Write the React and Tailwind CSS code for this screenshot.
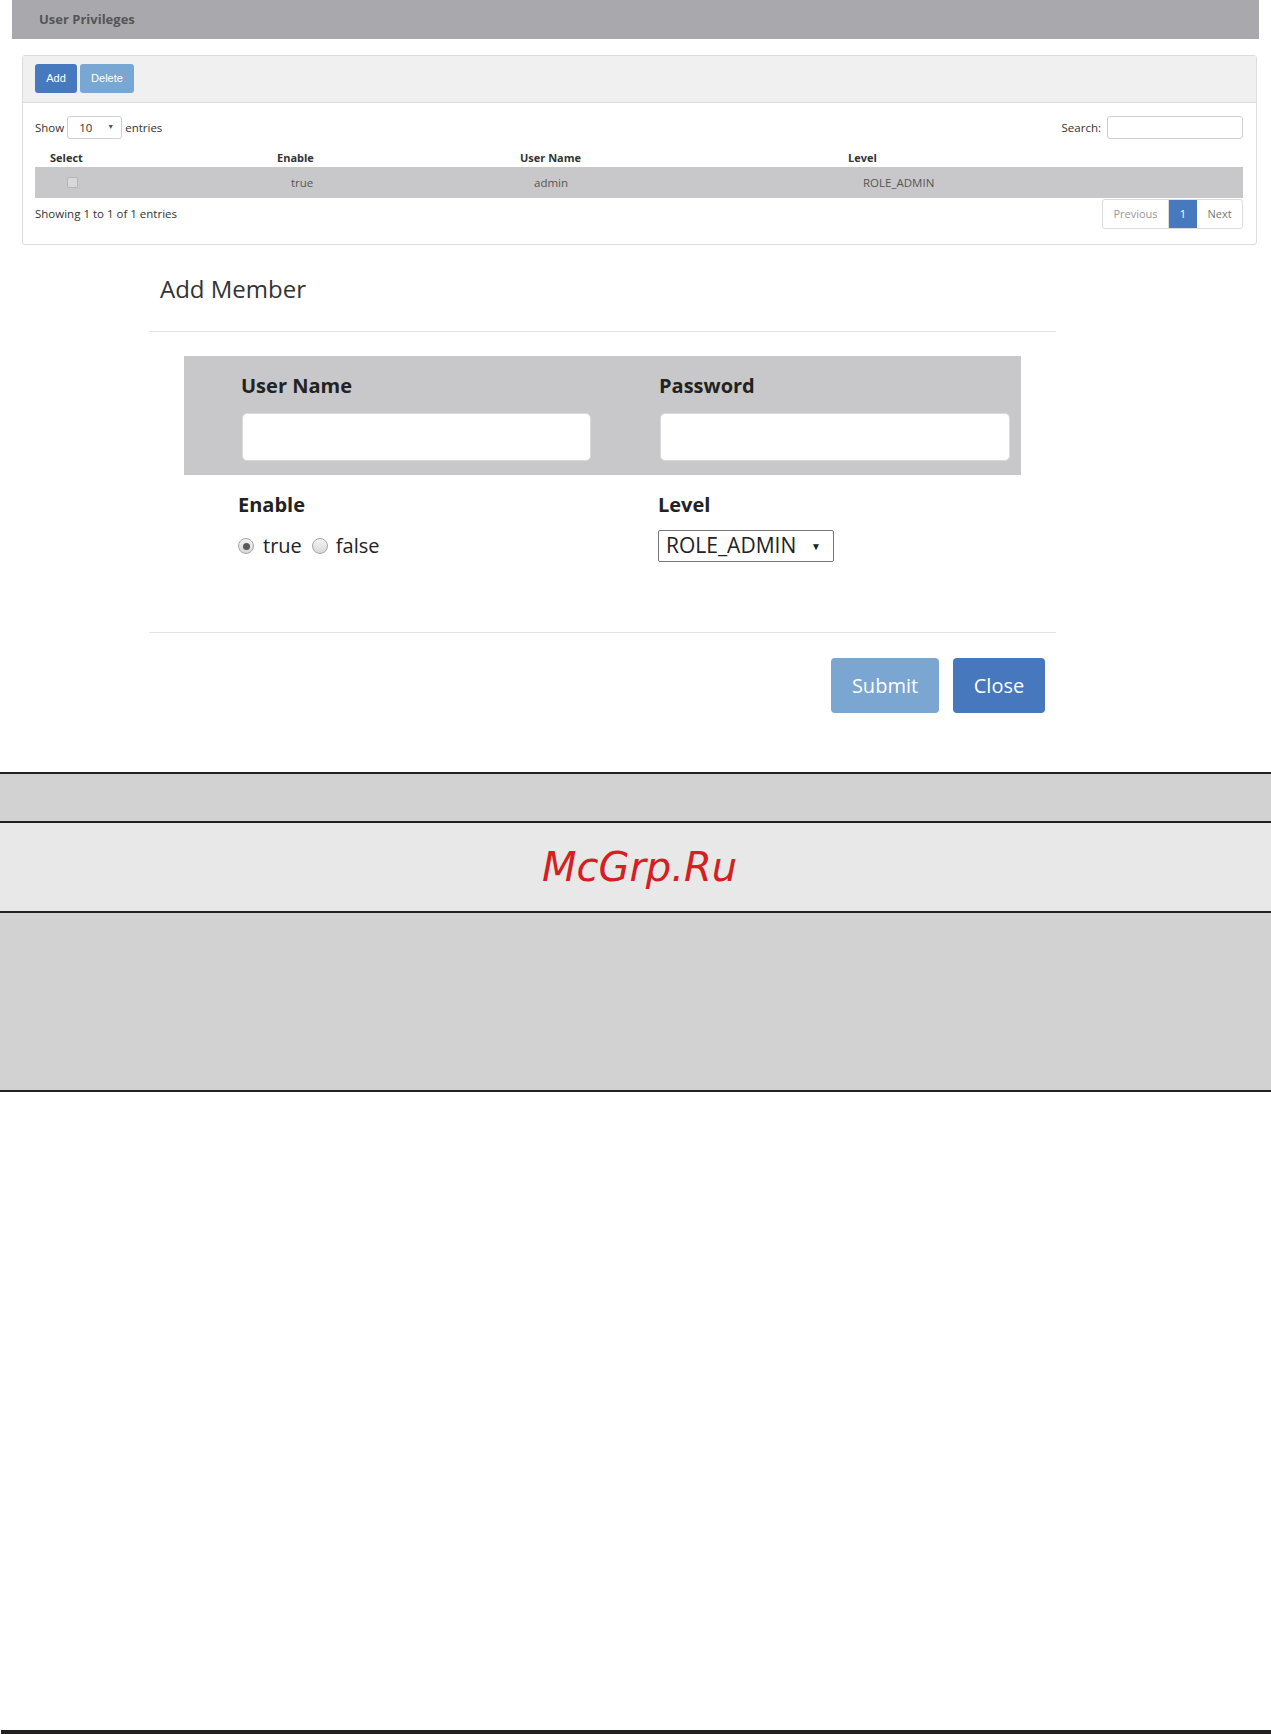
import React from "react";

const sans = { fontFamily: '"Open Sans", "Noto Sans", sans-serif' };

function Radio({ checked }) {
    return (
        <span className="w-[16px] h-[16px] rounded-full border border-[#a5a5a5] bg-gradient-to-b from-[#f4f4f4] to-[#d8d8d8] flex items-center justify-center">
            {checked && <span className="w-[7px] h-[7px] rounded-full bg-[#5a5a5a]" />}
        </span>
    );
}

function PrivilegesPanel() {
    return (
        <div className="ml-[22px] mt-[16px] w-[1235px] border border-[#dcdcdc] rounded-[3px] text-[11.5px] text-[#333]">
            {/* toolbar */}
            <div className="h-[47px] bg-[#f1f0f1] border-b border-[#dcdcdc] pl-[12px] pt-[8px] flex gap-[3px]">
                <button className="w-[42px] h-[29px] rounded-[3px] bg-[#4679bd] text-white text-[11px] font-['Liberation_Sans',sans-serif]">
                    Add
                </button>
                <button className="w-[54px] h-[29px] rounded-[3px] bg-[#79a7d3] text-white text-[11px] font-['Liberation_Sans',sans-serif]">
                    Delete
                </button>
            </div>

            <div className="pl-[12px] pr-[13px] pt-[13px] pb-[15px]">
                {/* length + search */}
                <div className="flex justify-between items-center h-[23px]">
                    <div className="flex items-center gap-[3px]">
                        <span>Show</span>
                        <div className="w-[55px] h-[23px] border border-[#cfcfcf] rounded-[3px] flex items-center justify-between pl-[11px] pr-[7px] bg-white">
                            <span>10</span>
                            <span className="text-[7px] text-[#555]">▼</span>
                        </div>
                        <span>entries</span>
                    </div>
                    <div className="flex items-center gap-[6px]">
                        <span>Search:</span>
                        <div className="w-[136px] h-[23px] border border-[#cfcfcf] rounded-[3px] bg-white" />
                    </div>
                </div>

                {/* table */}
                <div className="grid grid-cols-[200px_235px_285px_1fr] h-[28px] pt-[10px] items-center font-bold text-[11px]">
                    <span className="pl-[15px]">Select</span>
                    <span className="pl-[42px]">Enable</span>
                    <span className="pl-[50px]">User Name</span>
                    <span className="pl-[93px]">Level</span>
                </div>
                <div className="grid grid-cols-[200px_235px_285px_1fr] h-[31px] items-center bg-[#c8c8ca] text-[#555]">
                    <span className="pl-[32px]">
                        <span className="block w-[11px] h-[11px] rounded-[2px] border border-[#b5b5b5] bg-[#d8d8da]" />
                    </span>
                    <span className="pl-[56px]">true</span>
                    <span className="pl-[64px]">admin</span>
                    <span className="pl-[108px]">ROLE_ADMIN</span>
                </div>

                {/* info + pagination */}
                <div className="flex justify-between items-center mt-[1px]">
                    <span>Showing 1 to 1 of 1 entries</span>
                    <div className="flex h-[30px] border border-[#dcdcdc] rounded-[3px] overflow-hidden text-[11px]">
                        <span className="w-[66px] flex items-center justify-center text-[#999] border-r border-[#dcdcdc]">Previous</span>
                        <span className="w-[28px] flex items-center justify-center bg-[#4679bd] text-white">1</span>
                        <span className="w-[45px] flex items-center justify-center text-[#777]">Next</span>
                    </div>
                </div>
            </div>
        </div>
    );
}

function AddMember() {
    return (
        <div className="ml-[149px] w-[907px] mt-[27px] text-[#222]">
            <h2 className="pl-[11px] text-[24px] leading-[33px] text-[#333]">Add Member</h2>
            <div className="mt-[26px] h-px bg-[#e3e3e3]" />

            <div className="ml-[35px] mt-[24px] w-[837px] bg-[#c8c8ca] pl-[57px] pt-[16px] pb-[14px] grid grid-cols-[418px_350px]">
                <div>
                    <div className="text-[20px] font-bold leading-[28px]">User Name</div>
                    <div className="mt-[13px] ml-[1px] w-[349px] h-[48px] bg-white rounded-[5px] border border-[#dadada]" />
                </div>
                <div>
                    <div className="text-[20px] font-bold leading-[28px]">Password</div>
                    <div className="mt-[13px] ml-[1px] w-[350px] h-[48px] bg-white rounded-[5px] border border-[#dadada]" />
                </div>
            </div>

            <div className="ml-[89px] mt-[16px] grid grid-cols-[420px_1fr]">
                <div>
                    <div className="text-[20px] font-bold leading-[28px]">Enable</div>
                    <div className="mt-[11px] h-[32px] flex items-center text-[20px]">
                        <Radio checked />
                        <span className="ml-[9px]">true</span>
                        <span className="ml-[10px]"><Radio /></span>
                        <span className="ml-[8px]">false</span>
                    </div>
                </div>
                <div>
                    <div className="text-[20px] font-bold leading-[28px]">Level</div>
                    <div className="mt-[11px] w-[176px] h-[32px] border border-[#777] rounded-[2px] flex items-center justify-between pl-[7px] pr-[12px] bg-white">
                        <span className="text-[21px] text-[#222]">ROLE_ADMIN</span>
                        <span className="text-[10px] text-[#222]">▼</span>
                    </div>
                </div>
            </div>

            <div className="mt-[70px] h-px bg-[#e3e3e3]" />

            <div className="mt-[25px] pr-[11px] flex justify-end gap-[14px]">
                <button className="w-[108px] h-[55px] rounded-[4px] bg-[#7aa6d1] text-white text-[20px]">Submit</button>
                <button className="w-[92px] h-[55px] rounded-[4px] bg-[#4777bd] text-white text-[20px]">Close</button>
            </div>
        </div>
    );
}

export default function App() {
    return (
        <div className="min-h-[1734px] w-[1271px] bg-white flex flex-col" style={sans}>
            <div className="ml-[12px] w-[1247px] h-[39px] bg-[#a9a8ad] flex items-center pl-[27px]">
                <span className="text-[13px] font-bold text-[#555]">User Privileges</span>
            </div>

            <PrivilegesPanel />
            <AddMember />

            {/* footer bands */}
            <div className="mt-[59px] border-t-2 border-[#231f20]">
                <div className="h-[49px] bg-[#d2d2d2] border-b-2 border-[#231f20]" />
                <div className="h-[90px] bg-[#e8e8e8] border-b-2 border-[#231f20] flex items-center justify-center pl-[8px]">
                    <span className="text-[40px] italic text-[#d42020] font-['DejaVu_Sans',sans-serif]">McGrp.Ru</span>
                </div>
                <div className="h-[179px] bg-[#d2d2d2] border-b-2 border-[#231f20]" />
            </div>

            <div className="mt-auto ml-[1px] h-[4px] bg-[#231f20]" />
        </div>
    );
}
